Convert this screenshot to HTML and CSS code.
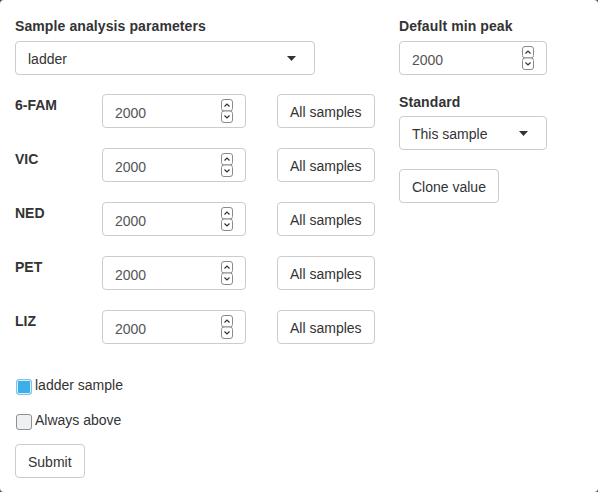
FILE: index.html
```html
<!DOCTYPE html>
<html>
<head>
<meta charset="utf-8">
<link rel="stylesheet" href="styles.css">
</head>
<body>
<div class="page">
  <div class="main">
    <div class="left">
      <label class="lbl">Sample analysis parameters</label>
      <div class="select wide"><span class="val">ladder</span><svg class="caret" width="9" height="5" viewBox="0 0 9 5"><polygon points="0,0 9,0 4.5,5" fill="#333"/></svg></div>
      <div class="rows">
        <div class="row"><label class="dye">6-FAM</label><div class="num"><span class="val">2000</span><svg class="spin" width="12" height="24" viewBox="0 0 12 24"><rect x="0.5" y="0.5" width="11" height="11.5" rx="2.5" fill="#fff" stroke="#8a8a8a"/><rect x="0.5" y="12" width="11" height="11.5" rx="2.5" fill="#fff" stroke="#8a8a8a"/><path d="M3.5 7.5 L6 5 L8.5 7.5" fill="none" stroke="#333" stroke-width="1.2"/><path d="M3.5 16.5 L6 19 L8.5 16.5" fill="none" stroke="#333" stroke-width="1.2"/></svg></div><button class="btn gap">All samples</button></div>
        <div class="row"><label class="dye">VIC</label><div class="num"><span class="val">2000</span><svg class="spin" width="12" height="24" viewBox="0 0 12 24"><rect x="0.5" y="0.5" width="11" height="11.5" rx="2.5" fill="#fff" stroke="#8a8a8a"/><rect x="0.5" y="12" width="11" height="11.5" rx="2.5" fill="#fff" stroke="#8a8a8a"/><path d="M3.5 7.5 L6 5 L8.5 7.5" fill="none" stroke="#333" stroke-width="1.2"/><path d="M3.5 16.5 L6 19 L8.5 16.5" fill="none" stroke="#333" stroke-width="1.2"/></svg></div><button class="btn gap">All samples</button></div>
        <div class="row"><label class="dye">NED</label><div class="num"><span class="val">2000</span><svg class="spin" width="12" height="24" viewBox="0 0 12 24"><rect x="0.5" y="0.5" width="11" height="11.5" rx="2.5" fill="#fff" stroke="#8a8a8a"/><rect x="0.5" y="12" width="11" height="11.5" rx="2.5" fill="#fff" stroke="#8a8a8a"/><path d="M3.5 7.5 L6 5 L8.5 7.5" fill="none" stroke="#333" stroke-width="1.2"/><path d="M3.5 16.5 L6 19 L8.5 16.5" fill="none" stroke="#333" stroke-width="1.2"/></svg></div><button class="btn gap">All samples</button></div>
        <div class="row"><label class="dye">PET</label><div class="num"><span class="val">2000</span><svg class="spin" width="12" height="24" viewBox="0 0 12 24"><rect x="0.5" y="0.5" width="11" height="11.5" rx="2.5" fill="#fff" stroke="#8a8a8a"/><rect x="0.5" y="12" width="11" height="11.5" rx="2.5" fill="#fff" stroke="#8a8a8a"/><path d="M3.5 7.5 L6 5 L8.5 7.5" fill="none" stroke="#333" stroke-width="1.2"/><path d="M3.5 16.5 L6 19 L8.5 16.5" fill="none" stroke="#333" stroke-width="1.2"/></svg></div><button class="btn gap">All samples</button></div>
        <div class="row"><label class="dye">LIZ</label><div class="num"><span class="val">2000</span><svg class="spin" width="12" height="24" viewBox="0 0 12 24"><rect x="0.5" y="0.5" width="11" height="11.5" rx="2.5" fill="#fff" stroke="#8a8a8a"/><rect x="0.5" y="12" width="11" height="11.5" rx="2.5" fill="#fff" stroke="#8a8a8a"/><path d="M3.5 7.5 L6 5 L8.5 7.5" fill="none" stroke="#333" stroke-width="1.2"/><path d="M3.5 16.5 L6 19 L8.5 16.5" fill="none" stroke="#333" stroke-width="1.2"/></svg></div><button class="btn gap">All samples</button></div>
      </div>
    </div>
    <div class="right">
      <label class="lbl">Default min peak</label>
      <div class="num full"><span class="val">2000</span><svg class="spin" width="12" height="24" viewBox="0 0 12 24"><rect x="0.5" y="0.5" width="11" height="11.5" rx="2.5" fill="#fff" stroke="#8a8a8a"/><rect x="0.5" y="12" width="11" height="11.5" rx="2.5" fill="#fff" stroke="#8a8a8a"/><path d="M3.5 7.5 L6 5 L8.5 7.5" fill="none" stroke="#333" stroke-width="1.2"/><path d="M3.5 16.5 L6 19 L8.5 16.5" fill="none" stroke="#333" stroke-width="1.2"/></svg></div>
      <label class="lbl second">Standard</label>
      <div class="select full"><span class="val">This sample</span><svg class="caret" width="9" height="5" viewBox="0 0 9 5"><polygon points="0,0 9,0 4.5,5" fill="#333"/></svg></div>
      <button class="btn clone">Clone value</button>
    </div>
  </div>
  <div class="checks">
    <label class="check"><span class="box on"></span><span class="ctext">ladder sample</span></label>
    <label class="check"><span class="box"></span><span class="ctext">Always above</span></label>
  </div>
  <button class="btn">Submit</button>
</div>
</body>
</html>
```
FILE: styles.css
```css
html, body {
  margin: 0;
  padding: 0;
  background: #4d4d4d;
}
.page {
  width: 598px;
  height: 492px;
  box-sizing: border-box;
  background: #fff;
  border-radius: 4px;
  padding: 16px 15px 0;
  font-family: "Liberation Sans", Arial, sans-serif;
  font-size: 14px;
  line-height: 20px;
  color: #333;
}
.main {
  display: flex;
  gap: 24px;
}
.left {
  width: 360px;
}
.right {
  width: 148px;
  display: flex;
  flex-direction: column;
  align-items: flex-start;
}
.lbl {
  display: block;
  font-weight: bold;
  margin-bottom: 5px;
  letter-spacing: 0.1px;
}
.lbl.second {
  margin-top: 17px;
  margin-bottom: 4px;
}
.select {
  display: flex;
  align-items: center;
  justify-content: space-between;
  height: 34px;
  box-sizing: border-box;
  border: 1px solid #ccc;
  border-radius: 4px;
  padding: 1px 18px 0 12px;
  color: #333;
}
.select.wide {
  width: 300px;
}
.full {
  width: 148px;
}
.caret {
  display: block;
}
.rows {
  margin-top: 19px;
  display: flex;
  flex-direction: column;
  gap: 20px;
}
.row {
  display: flex;
  align-items: flex-start;
  height: 34px;
}
.dye {
  width: 87px;
  font-weight: bold;
  padding-top: 1px;
}
.num {
  display: flex;
  align-items: center;
  justify-content: space-between;
  width: 144px;
  height: 34px;
  box-sizing: border-box;
  border: 1px solid #ccc;
  border-radius: 4px;
  padding: 0 12px;
  color: #555;
}
.num.full {
  width: 148px;
}
.num .val {
  padding-top: 3px;
}
.spin {
  display: block;
}
.btn {
  height: 34px;
  box-sizing: border-box;
  border: 1px solid #ccc;
  border-radius: 4px;
  background: #fff;
  padding: 1px 12px 0;
  font-family: "Liberation Sans", Arial, sans-serif;
  font-size: 14px;
  line-height: 20px;
  color: #333;
  margin: 0;
}
.btn.gap {
  margin-left: 31px;
}
.btn.clone {
  margin-top: 19px;
}
.checks {
  margin-top: 31px;
  display: flex;
  flex-direction: column;
  gap: 15px;
  margin-bottom: 14px;
}
.check {
  display: flex;
  align-items: flex-start;
  height: 20px;
}
.box {
  width: 16px;
  height: 16px;
  box-sizing: border-box;
  margin: 4px 0 0 1px;
  border: 1px solid #8e9092;
  border-radius: 3px;
  background: #eff0f1;
}
.box.on {
  border: 1px solid #7fc4ea;
  background: #3daee9;
  box-shadow: inset 0 0 0 1px #d6eefb;
}
.ctext {
  margin-left: 3px;
}
```
